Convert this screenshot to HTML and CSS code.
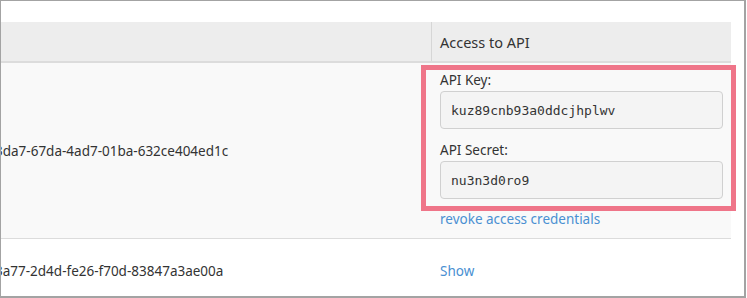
FILE: index.html
```html
<!DOCTYPE html>
<html lang="en">
<head>
    <meta charset="UTF-8">
    <meta name="viewport" content="width=device-width, initial-scale=1.0">
    <title>Applications</title>
    <link rel="stylesheet" href="styles.css">
</head>
<body>
    <div class="frame">
        <div class="apps-table">
            <!-- Header -->
            <div class="apps-row apps-head">
                <div class="cell cell-id"></div>
                <div class="cell cell-access">Access to API</div>
            </div>

            <!-- Application with credentials shown -->
            <div class="apps-row apps-open">
                <div class="cell cell-id">3da7-67da-4ad7-01ba-632ce404ed1c</div>
                <div class="cell cell-access">
                    <div class="credentials">
                        <span class="highlight"></span>
                        <label class="cred-label" for="api-key">API Key:</label>
                        <input class="cred-input" id="api-key" type="text" value="kuz89cnb93a0ddcjhplwv" readonly>
                        <label class="cred-label second" for="api-secret">API Secret:</label>
                        <input class="cred-input" id="api-secret" type="text" value="nu3n3d0ro9" readonly>
                    </div>
                    <a class="link revoke" href="#">revoke access credentials</a>
                </div>
            </div>

            <!-- Application with hidden credentials -->
            <div class="apps-row apps-closed">
                <div class="cell cell-id">3a77-2d4d-fe26-f70d-83847a3ae00a</div>
                <div class="cell cell-access">
                    <a class="link" href="#">Show</a>
                </div>
            </div>
        </div>
    </div>
</body>
</html>
```

FILE: styles.css
```css
/* Base styles */
body {
    margin: 0;
    background: #fff;
    font-family: 'Noto Sans', sans-serif;
    font-size: 13.5px;
    line-height: 20px;
    color: #333;
}

/* Outer frame of the screenshot */
.frame {
    width: 746px;
    height: 298px;
    box-sizing: border-box;
    border: 1px solid #a3a3a3;
    border-right-width: 2px;
    border-bottom-width: 2px;
    overflow: hidden;
}

/* Table */
.apps-table {
    margin: 21px 0 0 -16px;
    width: 746px;
}

.apps-row {
    display: grid;
    grid-template-columns: 446px 300px;
}

.cell-id {
    padding-left: 10px;
    display: flex;
    align-items: center;
    white-space: nowrap;
}

.apps-head {
    height: 39px;
    background: #ededed;
    border-bottom: 2px solid #dcdcdc;
}

.apps-head .cell-access {
    display: flex;
    align-items: center;
    padding-left: 8px;
    border-left: 1px solid #d6d6d6;
    font-size: 14.5px;
}

.apps-open {
    background: #f9f9f9;
    border-bottom: 1px solid #dcdcdc;
}

.apps-open .cell-access {
    padding: 7px 8px 9px 9px;
}

.apps-closed .cell {
    padding-top: 22px;
    padding-bottom: 22px;
}

.apps-closed .cell-access {
    padding-left: 9px;
}

/* Credentials */
.credentials {
    position: relative;
}

.highlight {
    position: absolute;
    top: -5px;
    left: -19px;
    right: -13px;
    bottom: -12px;
    border: 5px solid #ef7589;
    pointer-events: none;
}

.cred-label {
    display: block;
}

.cred-label.second {
    margin-top: 11px;
}

.cred-input {
    display: block;
    box-sizing: border-box;
    width: 100%;
    height: 38px;
    margin-top: 1px;
    padding: 0 10px;
    background: #f4f4f4;
    border: 1px solid #d0d0d0;
    border-radius: 4px;
    font-family: 'DejaVu Sans Mono', monospace;
    font-size: 13px;
    color: #333;
    outline: none;
}

.link {
    color: #4a90d2;
    text-decoration: none;
}

.revoke {
    display: block;
    margin-top: 10px;
}
```
